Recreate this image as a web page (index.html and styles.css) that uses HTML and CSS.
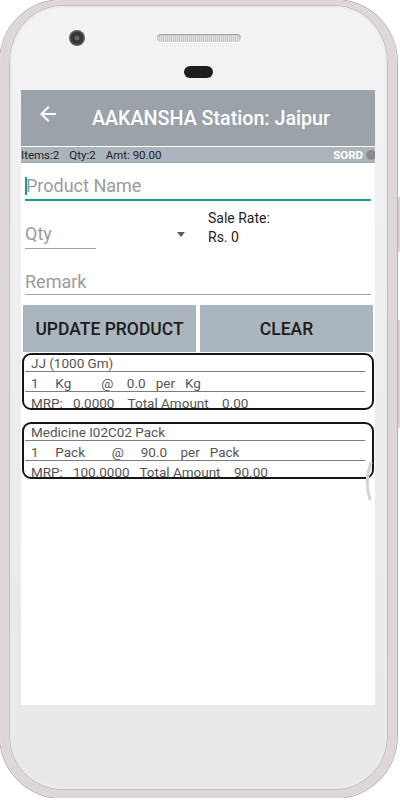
FILE: index.html
```html
<!DOCTYPE html>
<html lang="en">
<head>
<meta charset="UTF-8">
<meta name="viewport" content="width=device-width,initial-scale=1">
<title>Sale Order</title>
<link rel="stylesheet" href="styles.css">
</head>
<body>
<div class="phone">
  <span class="side-btn btn-power"></span>
  <span class="side-btn btn-volume"></span>

  <!-- Top bezel -->
  <div class="bezel-top">
    <div class="bezel-row">
      <span class="camera"></span>
      <span class="speaker"></span>
    </div>
    <span class="sensor"></span>
  </div>

  <div class="screen">
    <div class="appbar">
      <svg class="back" width="24" height="24" viewBox="0 0 24 24">
        <path d="M20 11H7.83l5.59-5.59L12 4l-8 8 8 8 1.41-1.41L7.83 13H20v-2z" fill="#fff"/>
      </svg>
      <h1 class="title">AAKANSHA Station: Jaipur</h1>
    </div>

    <div class="summary">
      <span>Items:2</span>
      <span>Qty:2</span>
      <span>Amt: 90.00</span>
      <span class="sord">SORD</span>
      <span class="dot"></span>
    </div>

    <div class="form">
      <div class="field active"><span class="cursor"></span><span class="hint">Product Name</span></div>
      <div class="qty-row">
        <div class="field qty"><span class="hint">Qty</span></div>
        <span class="caret"></span>
        <div class="rate">Sale Rate:<br>Rs. 0</div>
      </div>
      <div class="field remark"><span class="hint">Remark</span></div>
    </div>

    <div class="actions">
      <button class="btn">UPDATE PRODUCT</button>
      <button class="btn">CLEAR</button>
    </div>

    <div class="list">
      <div class="card">
        <div class="line">JJ (1000 Gm)</div>
        <div class="line">1     Kg         @    0.0   per   Kg</div>
        <div class="line">MRP:   0.0000    Total Amount    0.00</div>
      </div>
      <div class="card">
        <div class="line">Medicine I02C02 Pack</div>
        <div class="line">1     Pack        @     90.0    per   Pack</div>
        <div class="line">MRP:   100.0000   Total Amount    90.00</div>
      </div>
    </div>

    <!-- overscroll glow -->
    <svg class="scroll-hint" width="10" height="40" viewBox="0 0 10 40">
      <path d="M8 2 Q1 20 7 38" stroke="#d4d4d4" stroke-width="3" fill="none" stroke-linecap="round"/>
    </svg>
  </div>
</div>
</body>
</html>
```

FILE: styles.css
```css
body {
  margin: 0;
  background: #fff;
  font-family: Roboto, "Liberation Sans", sans-serif;
}

/* Phone shell */
.phone {
  position: relative;
  box-sizing: border-box;
  width: 397px;
  height: 798px;
  border-style: solid;
  border-width: 5px 9px 8px 9px;
  border-color: #ddd7da;
  border-radius: 62px;
  background: linear-gradient(#f3f3f5, #ececee 60%, #e8e8ea);
  box-shadow: 0 0 0 1px #b7b0b4, inset 0 0 0 1px #c2bbbf, inset 0 0 0 3px #ecebed;
  padding: 0 13px 0 12px;
}

.side-btn {
  position: absolute;
  right: -12px;
  width: 2px;
  background: #d9d3d6;
  border-left: 1px solid #b9b2b6;
}
.btn-power { top: 192px; height: 55px; }
.btn-volume { top: 315px; height: 108px; }

.bezel-top {
  height: 85px;
  padding-top: 25px;
  box-sizing: border-box;
}
.bezel-row {
  display: flex;
  align-items: center;
  height: 16px;
}
.camera {
  width: 16px;
  height: 16px;
  margin-left: 48px;
  border-radius: 50%;
  background: radial-gradient(circle at 50% 50%, #6a6a5a 0 2px, #2e3033 3px, #3b3d40 6px, #6d6f72 8px);
}
.speaker {
  width: 84px;
  height: 8px;
  margin-left: 72px;
  border-radius: 4px;
  background: repeating-linear-gradient(90deg, #c8c8ca 0 1px, #e2e2e4 1px 2px);
  box-shadow: inset 0 1px 1px #9a9a9c, 0 1px 0 #fafafa;
}
.sensor {
  display: block;
  width: 29px;
  height: 12px;
  margin: 20px auto 0;
  border-radius: 6px;
  background: #1d1d1f;
}

/* Screen */
.screen {
  position: relative;
  height: 615px;
  background: #fff;
  overflow: hidden;
}

.appbar {
  display: flex;
  align-items: center;
  height: 56px;
  background: #9ba2a9;
}
.back {
  margin: 0 0 9px 15px;
}
.title {
  margin: 0 0 0 32px;
  font-size: 19.7px;
  font-weight: 500;
  color: #fff;
}

.summary {
  display: flex;
  align-items: center;
  gap: 10px;
  height: 15px;
  margin-top: 1px;
  background: #aab4bb;
  border-bottom: 1px solid #9ea8b0;
  font-size: 11.5px;
  color: #222;
}
.sord {
  margin-left: auto;
  margin-right: -7px;
  font-weight: bold;
  color: #fff;
}
.dot {
  width: 10px;
  height: 10px;
  margin-right: -1px;
  border-radius: 50%;
  background: #8b8b8b;
}

/* Form */
.form {
  padding: 0 4px;
}
.field {
  font-size: 18px;
  line-height: 24px;
  color: #9b9b9b;
  border-bottom: 1px solid #a3a3a3;
  padding: 21px 0 0;
}
.field.active {
  padding: 11px 0 1px;
  border-bottom: 2px solid #1f9d8b;
}
.cursor {
  display: inline-block;
  width: 2px;
  height: 18px;
  margin-right: -1px;
  vertical-align: -3px;
  background: #1f9d8b;
}
.qty-row {
  display: flex;
  align-items: flex-start;
}
.field.qty {
  width: 71px;
  padding-bottom: 2px;
}
.caret {
  width: 0;
  height: 0;
  margin: 31px 0 0 81px;
  border-left: 4px solid transparent;
  border-right: 4px solid transparent;
  border-top: 5px solid #5c5c5c;
}
.rate {
  margin: 8px 0 0 23px;
  font-size: 14px;
  line-height: 19px;
  color: #1e1e1e;
}

/* Buttons */
.actions {
  display: flex;
  gap: 4px;
  padding: 0 2px;
  margin-top: 10px;
}
.btn {
  flex: 1;
  height: 47px;
  border: none;
  background: #abb5bd;
  font-family: Roboto, "Liberation Sans", sans-serif;
  font-size: 17.5px;
  font-weight: 500;
  color: #1c1c1c;
}

/* Order lines */
.list {
  padding: 1px 1px 0;
}
.card {
  border: 2px solid #161616;
  border-radius: 9px;
  padding: 0 7px 0 1px;
}
.card + .card {
  margin-top: 12px;
}
.line {
  padding: 4px 0 0 6px;
  font-size: 13.5px;
  line-height: 15px;
  color: #555;
  white-space: pre;
  border-bottom: 1.5px solid #7e7e7e;
}
.line:first-child {
  padding-top: 1px;
}
.line:last-child {
  border-bottom: none;
  margin-bottom: -3px;
}

.scroll-hint {
  position: absolute;
  top: 371px;
  right: 2px;
}
```
